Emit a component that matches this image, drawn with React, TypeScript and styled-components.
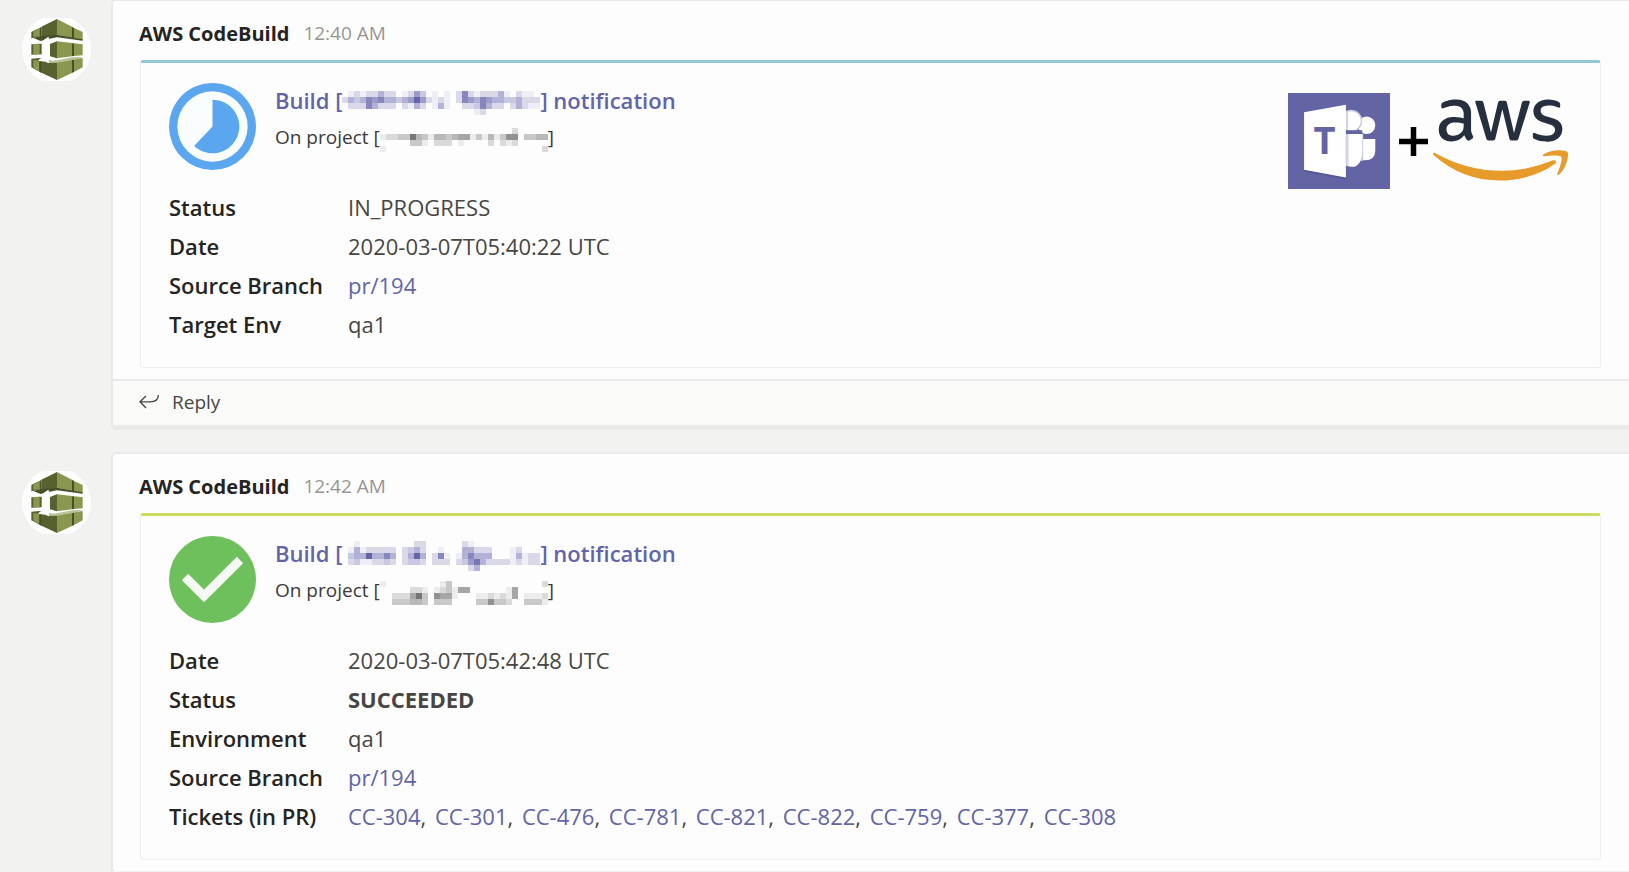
import React from "react";
import styled, { createGlobalStyle } from "styled-components";
import { FaAws } from "react-icons/fa";

const GlobalStyle = createGlobalStyle`
  * { box-sizing: border-box; }
  body {
    margin: 0;
    background: #f2f2f1;
    font-family: "Open Sans", "Noto Sans", sans-serif;
    color: #484644;
  }
`;

const Feed = styled.main`
  display: flex;
  flex-direction: column;
  gap: 29px;
  padding-top: 1px;
`;

const Post = styled.article`
  display: flex;
  align-items: stretch;
`;

const Rail = styled.div`
  flex: 0 0 113px;
  padding: 17px 0 0 22px;
`;

const Card = styled.section`
  flex: 1;
  min-width: 0;
  background: #fdfdfd;
  border-radius: 3px 0 0 3px;
  box-shadow: 0 0 0 2px #e9e9e8, 0 3px 0 2px #eae9e7;
`;

const CardHeader = styled.header`
  display: flex;
  align-items: center;
  gap: 14px;
  height: 59px;
  padding: 5px 28px 0 26px;
`;

const Author = styled.strong`
  font-size: 20px;
  font-weight: 700;
  color: #252423;
`;

const Time = styled.time`
  font-size: 19px;
  color: #979593;
`;

const Attachment = styled.div<{ $accent: string }>`
  display: flex;
  align-items: flex-start;
  margin: 0 28px 11px 27px;
  padding: 20px 32px 23px 28px;
  border: 1px solid #efefee;
  border-top: 3px solid ${(p) => p.$accent};
  border-radius: 3px;
`;

const Details = styled.div`
  flex: 1;
  min-width: 0;
`;

const Summary = styled.div`
  display: flex;
  gap: 19px;
  margin-bottom: 18px;
`;

const StatusIcon = styled.svg`
  flex: none;
  width: 87px;
  height: 87px;
`;

const Title = styled.h2`
  display: flex;
  align-items: center;
  margin: 0;
  height: 33px;
  font-size: 22px;
  font-weight: 600;
  color: #6264a7;
  white-space: pre;
`;

const Subtitle = styled.p`
  display: flex;
  align-items: center;
  margin: 0;
  height: 42px;
  font-size: 19px;
  color: #3b3a39;
  white-space: pre;
`;

const MosaicImage = styled.svg`
  flex: none;
  margin-top: 6px;
`;

const Facts = styled.table`
  border-collapse: collapse;
  font-size: 22px;
  line-height: 39px;

  th, td {
    padding: 0;
    text-align: left;
    vertical-align: top;
  }
  th {
    width: 179px;
    font-weight: 600;
    color: #252423;
    white-space: nowrap;
  }
`;

const Link = styled.a`
  color: #6264a7;
  text-decoration: none;
`;

const Ticket = styled.span`
  margin-right: 3px;
`;

const Logos = styled.div`
  flex: none;
  display: flex;
  align-items: center;
  gap: 5px;
  margin-top: 10px;
`;

const PlusSign = styled.svg`
  width: 29px;
  height: 29px;
  margin-left: 4px;
`;

const AwsMark = styled(FaAws)`
  width: 135px;
  height: 108px;
  margin: -14px 0 -12px;

  path { fill: url(#aws-colors); }
`;

const Gradients = styled.svg`
  position: absolute;
  width: 0;
  height: 0;
`;

const CardFooter = styled.footer`
  display: flex;
  height: 46px;
  padding: 0 0 2px 26px;
  border-top: 2px solid #e9e9e8;
  background: #fafaf9;
`;

const ReplyButton = styled.button`
  display: flex;
  align-items: center;
  gap: 13px;
  padding: 0;
  border: 0;
  background: none;
  font: inherit;
  font-size: 19px;
  color: #484644;
`;

const CELL = 6;

const PURPLE = ["", "#eeeef6", "#d9d9ea", "#c8c8e2", "#b2b2d6", "#9c9ccb", "#8787be", "#7575b4", "#6365a7"];
const GREY = ["", "#ececec", "#dadada", "#c8c8c8", "#b8b8b8", "#a6a6a6", "#929292", "#777777", "#666666"];

function Mosaic({ rows, colors, label }: { rows: string[]; colors: string[]; label: string }) {
  const w = rows[0].length * CELL;
  const h = rows.length * CELL;
  return (
    <MosaicImage width={w} height={h} viewBox={`0 0 ${w} ${h}`} role="img" aria-label={label} shapeRendering="crispEdges">
      {rows.flatMap((row, y) =>
        [...row].map((level, x) =>
          level === "0" ? null : (
            <rect key={`${x}-${y}`} x={x * CELL} y={y * CELL} width={CELL} height={CELL} fill={colors[Number(level)]} />
          )
        )
      )}
    </MosaicImage>
  );
}

function CodeBuildAvatar() {
  return (
    <svg width="69" height="63" viewBox="12 12 207 189" role="img" aria-label="AWS CodeBuild">
      <circle cx="115.500" cy="106.500" r="103.500" fill="#fdfdfd" />
      <path fill="#56612f" d="M40 54 62 43V69L40 73ZM70 38 117 15V62L92 66 70 69ZM40 91 71 89V121L40 122ZM40 134 64 132 92 139 117 144V198L72 177 40 160ZM96 90 117 82V133L96 127Z" />
      <path fill="#8a974f" d="M117 15 162 38V71L117 62ZM168 42 194 54V77L168 72ZM117 82 162 87V127L117 133ZM168 88 194 91V124L168 126ZM117 144 162 137V177L117 198ZM168 136 194 132V160L168 174ZM46 90 65 89V121H46ZM46 53 64 43V66L46 69ZM46 138 64 141V171L46 162Z" />
      <path fill="#46512a" d="M162 38 168 42V72L162 71ZM162 88H168V126L162 127ZM162 137 168 136V174L162 177ZM64 42 70 39V71L64 69ZM64 142 70 144V176L64 173ZM46 72 70 66 92 64 117 62 194 76V80L117 70 88 76 68 81Z" />
      <path fill="#b9c393" d="M92 141 117 139 162 130 190 129V133L117 146 92 147Z" />
      <path fill="#fff" d="M76 79 91 68 95 78V134L92 148 82 143 60 140 66 134 76 131Z" />
    </svg>
  );
}

function InProgressIcon() {
  return (
    <StatusIcon viewBox="508 249 260 260" role="img" aria-label="In progress">
      <circle cx="638" cy="379" r="130" fill="#5ba7ef" />
      <circle cx="638" cy="379" r="105" fill="#fafdfd" />
      <path d="M638 299A80 80 0 1 1 583 437L638 379Z" fill="#5ba7ef" />
    </StatusIcon>
  );
}

function SucceededIcon() {
  return (
    <StatusIcon viewBox="0 0 87 87" role="img" aria-label="Succeeded">
      <circle cx="43.500" cy="43.500" r="43.500" fill="#6dc05b" />
      <path d="M16 41 35 60 71 24" fill="none" stroke="#f4faf3" strokeWidth="9" />
    </StatusIcon>
  );
}

function TeamsLogo() {
  return (
    <svg width="102" height="96" viewBox="84 129 305 286" preserveAspectRatio="none" role="img" aria-label="Microsoft Teams">
      <path fill="#6264a3" d="M84 129H389V415H84Z" />
      <circle cx="319" cy="225" r="26" fill="#fff" />
      <path fill="#fff" d="M300 266H345V300Q345 329 314 329H300Z" />
      <circle cx="273" cy="212" r="33" fill="#c9cae2" />
      <circle cx="273" cy="212" r="29" fill="#fff" />
      <path fill="#c9cae2" d="M302 252H309V326L302 334Z" />
      <path fill="#fff" d="M257 251H306V300C306 332 294 349 275 349Q266 349 257 345Z" />
      <path fill="#d3d4e8" d="M257 184 264 183V239L257 238ZM257 251H265V347L257 345Z" />
      <path fill="#6264a3" d="M257 240H306V251H257Z" />
      <path fill="#575996" d="M136 364 257 387V378L132 358Z" />
      <path fill="#fff" d="M132 186 257 164V381L132 358Z" />
      <text x="160" y="312" fontFamily="Open Sans, sans-serif" fontWeight="700" fontSize="114" fill="#6264a3">T</text>
    </svg>
  );
}

function AwsLogo() {
  return (
    <>
      <Gradients aria-hidden="true">
        <linearGradient id="aws-colors" x1="0" y1="0" x2="0" y2="1">
          <stop offset="57%" stopColor="#252f3e" />
          <stop offset="57%" stopColor="#e79b2a" />
        </linearGradient>
      </Gradients>
      <AwsMark role="img" aria-label="AWS" />
    </>
  );
}

function Integration() {
  return (
    <Logos>
      <TeamsLogo />
      <PlusSign viewBox="0 0 29 29" aria-hidden="true">
        <path d="M0 14.500H29M14.500 0V29" stroke="#000" strokeWidth="5.500" />
      </PlusSign>
      <AwsLogo />
    </Logos>
  );
}

function ReplyIcon() {
  return (
    <svg width="20" height="14" viewBox="417 143 60 42" fill="none" stroke="#484644" strokeWidth="4" aria-hidden="true">
      <path d="M438 146 420 163.500 438 182M420 163.500H450Q475 163.500 475 143" />
    </svg>
  );
}

type Fact = { name: string; value: React.ReactNode };

type BuildPostProps = {
  time: string;
  accent: string;
  icon: React.ReactNode;
  buildMosaic: string[];
  projectMosaic: string[];
  facts: Fact[];
  aside?: React.ReactNode;
  footer?: React.ReactNode;
};

function BuildPost({ time, accent, icon, buildMosaic, projectMosaic, facts, aside, footer }: BuildPostProps) {
  return (
    <Post>
      <Rail>
        <CodeBuildAvatar />
      </Rail>
      <Card>
        <CardHeader>
          <Author>AWS CodeBuild</Author>
          <Time>{time}</Time>
        </CardHeader>
        <Attachment $accent={accent}>
          <Details>
            <Summary>
              {icon}
              <div>
                <Title>
                  <span>Build [</span>
                  <Mosaic rows={buildMosaic} colors={PURPLE} label="Redacted build name" />
                  <span>] notification</span>
                </Title>
                <Subtitle>
                  <span>On project [</span>
                  <Mosaic rows={projectMosaic} colors={GREY} label="Redacted project name" />
                  <span>]</span>
                </Subtitle>
              </div>
            </Summary>
            <Facts>
              <tbody>
                {facts.map((f) => (
                  <tr key={f.name}>
                    <th scope="row">{f.name}</th>
                    <td>{f.value}</td>
                  </tr>
                ))}
              </tbody>
            </Facts>
          </Details>
          {aside}
        </Attachment>
        {footer}
      </Card>
    </Post>
  );
}

const TICKETS = ["CC-304", "CC-301", "CC-476", "CC-781", "CC-821", "CC-822", "CC-759", "CC-377", "CC-308"];

const branch = <Link href="#pr-194">pr/194</Link>;

export default function App() {
  return (
    <>
      <GlobalStyle />
      <Feed>
        <BuildPost
          time="12:40 AM"
          accent="#93c9d6"
          icon={<InProgressIcon />}
          buildMosaic={[
            "012122422012530101026212224102110",
            "243465644345852121026546544334222",
            "022264222021420141002236422024211",
            "000000000000000000000012000000000",
          ]}
          projectMosaic={[
            "0000000000000000000000200000",
            "1223374314434551314136603344",
            "0000033102220100002021200000",
            "1000000000000000000000000002",
          ]}
          facts={[
            { name: "Status", value: "IN_PROGRESS" },
            { name: "Date", value: "2020-03-07T05:40:22 UTC" },
            { name: "Source Branch", value: branch },
            { name: "Target Env", value: "qa1" },
          ]}
          aside={<Integration />}
          footer={
            <CardFooter>
              <ReplyButton type="button">
                <ReplyIcon />
                Reply
              </ReplyButton>
            </CardFooter>
          }
        />
        <BuildPost
          time="12:42 AM"
          accent="#d0da62"
          icon={<SucceededIcon />}
          buildMosaic={[
            "001000000000220000002100000000000",
            "014122222023420010004422200012000",
            "034484464024840261014644400014122",
            "023112232023320222023574222212122",
            "000000000000000000000240000000000",
          ]}
          projectMosaic={[
            "1000000000130000000000000002",
            "0000022101231550000001500000",
            "0022257306551000112121501112",
            "0033344303330000336332003331",
          ]}
          facts={[
            { name: "Date", value: "2020-03-07T05:42:48 UTC" },
            { name: "Status", value: <strong>SUCCEEDED</strong> },
            { name: "Environment", value: "qa1" },
            { name: "Source Branch", value: branch },
            {
              name: "Tickets (in PR)",
              value: TICKETS.map((t, i) => (
                <Ticket key={t}>
                  <Link href={`#${t}`}>{t}</Link>
                  {i < TICKETS.length - 1 && ", "}
                </Ticket>
              )),
            },
          ]}
        />
      </Feed>
    </>
  );
}
